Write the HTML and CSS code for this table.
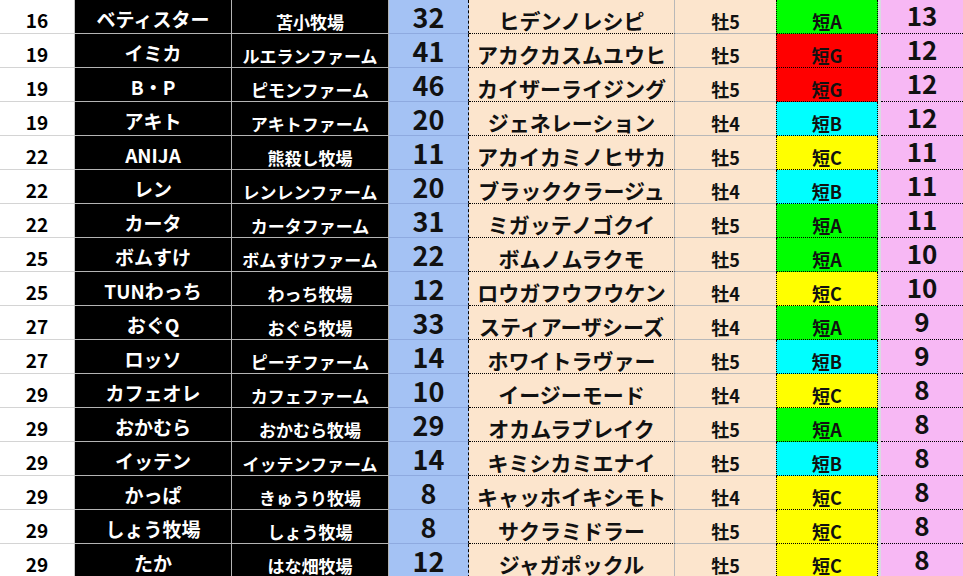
FILE: index.html
```html
<!DOCTYPE html>
<html lang="ja">
<head>
<meta charset="utf-8">
<link rel="stylesheet" href="styles.css">
</head>
<body>
<div class="sheet">
  <div class="row"><div class="c r">16</div><div class="c n">ベティスター</div><div class="c f">苫小牧場</div><div class="c b">32</div><div class="c h">ヒデンノレシピ</div><div class="c s">牡5</div><div class="c g ga">短A</div><div class="x"></div><div class="c p">13</div></div>
  <div class="row"><div class="c r">19</div><div class="c n">イミカ</div><div class="c f">ルエランファーム</div><div class="c b">41</div><div class="c h">アカクカスムユウヒ</div><div class="c s">牡5</div><div class="c g gg">短G</div><div class="x"></div><div class="c p">12</div></div>
  <div class="row"><div class="c r">19</div><div class="c n">B・P</div><div class="c f">ピモンファーム</div><div class="c b">46</div><div class="c h">カイザーライジング</div><div class="c s">牡5</div><div class="c g gg">短G</div><div class="x"></div><div class="c p">12</div></div>
  <div class="row"><div class="c r">19</div><div class="c n">アキト</div><div class="c f">アキトファーム</div><div class="c b">20</div><div class="c h">ジェネレーション</div><div class="c s">牡4</div><div class="c g gb">短B</div><div class="x"></div><div class="c p">12</div></div>
  <div class="row"><div class="c r">22</div><div class="c n">ANIJA</div><div class="c f">熊殺し牧場</div><div class="c b">11</div><div class="c h">アカイカミノヒサカ</div><div class="c s">牡5</div><div class="c g gc">短C</div><div class="x"></div><div class="c p">11</div></div>
  <div class="row"><div class="c r">22</div><div class="c n">レン</div><div class="c f">レンレンファーム</div><div class="c b">20</div><div class="c h">ブラッククラージュ</div><div class="c s">牡4</div><div class="c g gb">短B</div><div class="x"></div><div class="c p">11</div></div>
  <div class="row"><div class="c r">22</div><div class="c n">カータ</div><div class="c f">カータファーム</div><div class="c b">31</div><div class="c h">ミガッテノゴクイ</div><div class="c s">牡5</div><div class="c g ga">短A</div><div class="x"></div><div class="c p">11</div></div>
  <div class="row"><div class="c r">25</div><div class="c n">ボムすけ</div><div class="c f">ボムすけファーム</div><div class="c b">22</div><div class="c h">ボムノムラクモ</div><div class="c s">牡5</div><div class="c g ga">短A</div><div class="x"></div><div class="c p">10</div></div>
  <div class="row"><div class="c r">25</div><div class="c n">TUNわっち</div><div class="c f">わっち牧場</div><div class="c b">12</div><div class="c h">ロウガフウフウケン</div><div class="c s">牡4</div><div class="c g gc">短C</div><div class="x"></div><div class="c p">10</div></div>
  <div class="row"><div class="c r">27</div><div class="c n">おぐQ</div><div class="c f">おぐら牧場</div><div class="c b">33</div><div class="c h">スティアーザシーズ</div><div class="c s">牡4</div><div class="c g ga">短A</div><div class="x"></div><div class="c p">9</div></div>
  <div class="row"><div class="c r">27</div><div class="c n">ロッソ</div><div class="c f">ピーチファーム</div><div class="c b">14</div><div class="c h">ホワイトラヴァー</div><div class="c s">牡5</div><div class="c g gb">短B</div><div class="x"></div><div class="c p">9</div></div>
  <div class="row"><div class="c r">29</div><div class="c n">カフェオレ</div><div class="c f">カフェファーム</div><div class="c b">10</div><div class="c h">イージーモード</div><div class="c s">牡4</div><div class="c g gc">短C</div><div class="x"></div><div class="c p">8</div></div>
  <div class="row"><div class="c r">29</div><div class="c n">おかむら</div><div class="c f">おかむら牧場</div><div class="c b">29</div><div class="c h">オカムラブレイク</div><div class="c s">牡5</div><div class="c g ga">短A</div><div class="x"></div><div class="c p">8</div></div>
  <div class="row"><div class="c r">29</div><div class="c n">イッテン</div><div class="c f">イッテンファーム</div><div class="c b">14</div><div class="c h">キミシカミエナイ</div><div class="c s">牡5</div><div class="c g gb">短B</div><div class="x"></div><div class="c p">8</div></div>
  <div class="row"><div class="c r">29</div><div class="c n">かっぱ</div><div class="c f">きゅうり牧場</div><div class="c b">8</div><div class="c h">キャッホイキシモト</div><div class="c s">牡4</div><div class="c g gc">短C</div><div class="x"></div><div class="c p">8</div></div>
  <div class="row"><div class="c r">29</div><div class="c n">しょう牧場</div><div class="c f">しょう牧場</div><div class="c b">8</div><div class="c h">サクラミドラー</div><div class="c s">牡5</div><div class="c g gc">短C</div><div class="x"></div><div class="c p">8</div></div>
  <div class="row"><div class="c r">29</div><div class="c n">たか</div><div class="c f">はな畑牧場</div><div class="c b">12</div><div class="c h">ジャガポックル</div><div class="c s">牡5</div><div class="c g gc">短C</div><div class="x"></div><div class="c p">8</div></div>
</div>
</body>
</html>
```
FILE: styles.css
```css
html, body {
  margin: 0;
  padding: 0;
  background: #ffffff;
  overflow: hidden;
}
body {
  width: 963px;
  height: 576px;
  font-family: "Noto Sans CJK JP", "Noto Sans", sans-serif;
  font-weight: 700;
}
.sheet {
  display: flex;
  flex-direction: column;
}
.row {
  display: grid;
  grid-template-columns: 75px 157px 157px 80px 206px 101px 102px 3px 82px;
  height: 34px;
}
.c {
  box-sizing: border-box;
  display: flex;
  justify-content: center;
  align-items: flex-end;
  line-height: 1;
  white-space: nowrap;
}
.r {
  background: #ffffff;
  color: #000000;
  font-size: 19px;
  padding-bottom: 4px;
  border-right: 1px solid #c6c6c6;
  border-bottom: 1px solid #d4d4d4;
}
.n, .f {
  background: #000000;
  color: #ffffff;
  border-right: 1px solid #b4b4b4;
  border-bottom: 1px solid #b4b4b4;
}
.n {
  font-size: 19px;
  padding-bottom: 5px;
}
.f {
  font-size: 17px;
  padding-bottom: 3px;
}
.b {
  background: #a4c2f4;
  color: #111111;
  font-size: 27px;
  padding-bottom: 3px;
  border-bottom: 1px solid #8eaae0;
  border-right: 1px dashed #000000;
}
.h {
  background: #fce5cd;
  color: #111111;
  font-size: 21px;
  padding-bottom: 2px;
  border-bottom: 1px dotted #000000;
  border-right: 1px solid #b8b8b8;
}
.s {
  background: #fce5cd;
  color: #111111;
  font-size: 18px;
  padding-bottom: 3px;
  border-bottom: 1px solid #b8b8b8;
}
.g {
  color: #111111;
  font-size: 18px;
  padding-bottom: 3px;
  border-left: 1px dotted #000000;
  border-right: 1px dotted #000000;
  border-bottom: 1px dotted #000000;
}
.ga { background: #00ff00; }
.gg { background: #ff0000; }
.gb { background: #00ffff; }
.gc { background: #ffff00; }
.x {
  background: #d9d9e1;
}
.p {
  background: #f7b8f4;
  color: #111111;
  font-size: 26px;
  padding-bottom: 5px;
  border-bottom: 1px dotted #000000;
}
```
